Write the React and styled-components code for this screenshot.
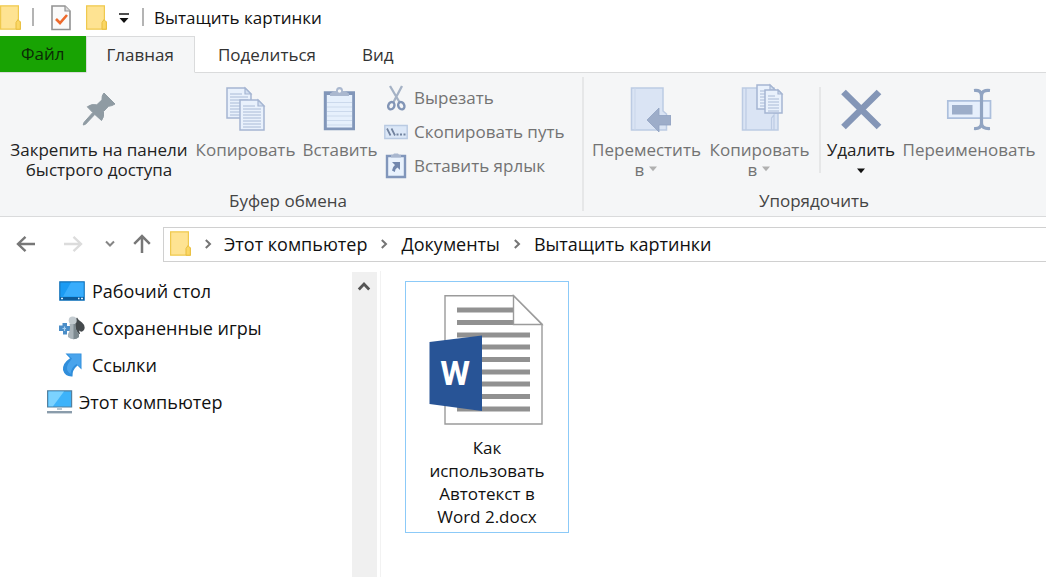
import React from "react";
import styled, { createGlobalStyle } from "styled-components";

const GlobalStyle = createGlobalStyle`
  * { box-sizing: border-box; }
  body { margin: 0; background: #fff; }
  button { font: inherit; color: inherit; background: none; border: 0; padding: 0; margin: 0; cursor: default; }
  a { color: inherit; text-decoration: none; }
  svg { display: block; flex: none; }
`;

const Window = styled.div`
  display: flex;
  flex-direction: column;
  min-height: 100vh;
  overflow: hidden;
  background: #fff;
  color: #111;
  font-family: "Open Sans", "Noto Sans", sans-serif;
  font-size: 17px;
  line-height: 20px;
  white-space: nowrap;
`;

const TitleBar = styled.header`
  display: flex;
  align-items: center;
  height: 36px;
`;

const QuickButton = styled.button`
  width: ${(p) => p.$width}px;
  height: 36px;
  display: flex;
  align-items: center;
  justify-content: ${(p) => p.$align || "center"};
`;

const TitleRule = styled.span`
  width: 2px;
  height: 18px;
  margin: 0 ${(p) => p.$gap}px 2px;
  background: #b4b4b4;
`;

const Title = styled.h1`
  margin: 0;
  padding-left: 2px;
  font-size: 17px;
  font-weight: 400;
`;

const TabBar = styled.nav`
  display: flex;
  height: 37px;
  border-bottom: 1px solid #dadbdc;
`;

const Tab = styled.button`
  height: 37px;
  padding: 0 22px;
  color: #333;
  border: 1px solid transparent;
  ${(p) => p.$active && `
    padding: 0 20px;
    background: #f5f6f7;
    border-color: #dadbdc;
    border-bottom-color: #f5f6f7;
  `}
  ${(p) => p.$file && `
    padding: 0 20px;
    height: 36px;
    background: #18a303;
    color: #0b2a06;
  `}
`;

const Ribbon = styled.section`
  display: flex;
  height: 144px;
  padding-top: 4px;
  background: #f5f6f7;
  border-bottom: 1px solid #dadbdc;
`;

const Group = styled.div`
  flex: none;
  display: flex;
  flex-direction: column;
  width: ${(p) => p.$width}px;
  height: 134px;
  border-right: ${(p) => (p.$ruled ? "2px solid #e6e7e8" : "0")};
`;

const GroupBody = styled.div`
  flex: 1;
  display: flex;
  padding: 4px 0 0 ${(p) => p.$inset}px;
`;

const GroupLabel = styled.div`
  height: 20px;
  padding-right: ${(p) => p.$shift || 0}px;
  text-align: center;
  color: #444;
`;

const BigButton = styled.button`
  flex: none;
  width: ${(p) => p.$width}px;
  height: 102px;
  display: flex;
  flex-direction: column;
  align-items: center;
  color: ${(p) => (p.$enabled ? "#222" : "#737373")};
  svg.icon { margin: 2px 0 7px; }
  svg.caret { display: inline-block; margin: 0 0 4px 4px; }
  > svg.caret { margin: 8px 0 0; }
`;

const SmallColumn = styled.div`
  display: flex;
  flex-direction: column;
  padding-left: 4px;
`;

const SmallButton = styled.button`
  display: flex;
  align-items: center;
  gap: 6px;
  height: 34px;
  color: #737373;
`;

const GroupRule = styled.span`
  width: 2px;
  height: 86px;
  margin: 6px 3px 0 5px;
  background: #e6e7e8;
`;

const AddressRow = styled.div`
  display: flex;
  align-items: center;
  height: 54px;
  padding-left: 16px;
`;

const NavButton = styled.button`
  width: ${(p) => p.$width}px;
  height: 34px;
  display: flex;
  align-items: center;
`;

const AddressBox = styled.nav`
  flex: 1;
  display: flex;
  align-items: center;
  height: 35px;
  padding-left: 6px;
  font-size: 18px;
  border: 1px solid #d0d0d0;
  border-right: 0;
`;

const CrumbSeparator = styled.span`
  display: flex;
  justify-content: center;
  width: ${(p) => p.$width}px;
`;

const Body = styled.main`
  flex: 1;
  display: flex;
`;

const Tree = styled.ul`
  flex: none;
  width: 352px;
  margin: 0;
  padding: 0;
  list-style: none;
  font-size: 18px;
`;

const TreeLink = styled.a`
  display: flex;
  align-items: center;
  gap: ${(p) => (p.$nested ? 7 : 6)}px;
  height: 37px;
  padding: 2px 0 0 ${(p) => (p.$nested ? 59 : 46)}px;
`;

const ScrollTrack = styled.div`
  flex: none;
  width: 25px;
  margin: 1px 3px 0 0;
  background: #f0f0f0;
`;

const ScrollUp = styled.button`
  display: flex;
  align-items: center;
  justify-content: center;
  width: 24px;
  height: 28px;
`;

const Files = styled.section`
  flex: 1;
  padding: 10px 24px;
  border-left: 1px solid #f2f2f2;
`;

const FileTile = styled.button`
  display: flex;
  flex-direction: column;
  align-items: center;
  width: 164px;
  height: 252px;
  padding-top: 11px;
  border: 1px solid #8ccaf8;
`;

const FileName = styled.span`
  width: 124px;
  margin-top: 9px;
  line-height: 23px;
  white-space: normal;
  text-align: center;
`;

const FolderIcon = () => (
  <svg width="21" height="26" viewBox="0 0 21 26" aria-hidden="true">
    <path d="M.6.8H18.4V17H20.3V24.2H.6Z" fill="#fee392" stroke="#efc94e" strokeWidth="1.2" />
    <path d="M16 24.2V17.5L18 14.6L20.3 17V24.2Z" fill="#fbd765" stroke="#e8bd3e" />
  </svg>
);

const CheckDocIcon = () => (
  <svg width="20" height="26" viewBox="0 0 20 26" aria-hidden="true">
    <path d="M1 1H14L19 6V24.5H1Z" fill="#fafafa" stroke="#929292" strokeWidth="1.6" />
    <path d="M14 1V6H19" fill="#ddd" stroke="#929292" strokeWidth="1.2" />
    <path d="M5 14L9 18L16 10" fill="none" stroke="#ee6a2c" strokeWidth="2.6" />
  </svg>
);

const MenuIcon = () => (
  <svg width="12" height="12" viewBox="0 0 12 12" aria-hidden="true">
    <path d="M1 2H11" stroke="#222" strokeWidth="1.6" />
    <path d="M1.5 6H10.5L6 11Z" fill="#111" />
  </svg>
);

const Icon48 = ({ children }) => (
  <svg className="icon" width="48" height="50" viewBox="0 0 48 50" aria-hidden="true">{children}</svg>
);

const PinIcon = () => (
  <Icon48>
    <path d="M29 10L40 21Q37 23 33.5 23.3L28.5 28.5Q29.5 34 26.5 37.5L19.8 31.4L10.5 41.3L8.2 42L9 39.4L17.8 29.5L12.3 23.8Q16.5 20.5 21.8 21.8L27 16.8Q26.5 12.5 29 10Z" fill="#8f9ba3" stroke="#8f9ba3" strokeWidth="1" strokeLinejoin="round" />
  </Icon48>
);

const Page = ({ x, y, w, h, lines, step = 3 }) => {
  const fold = Math.round(w / 4);
  return (
    <g transform={`translate(${x} ${y})`}>
      <path d={`M0 0H${w - fold}L${w} ${fold}V${h}H0Z`} fill="#e9f1fc" stroke="#a5b5d2" strokeWidth="1.5" />
      {Array.from({ length: lines }, (_, i) => (
        <path key={i} d={`M3 ${6 + i * step}H${i === 0 ? w - fold - 3 : w - 3}`} stroke="#a9bad6" />
      ))}
      <path d={`M${w - fold} 0V${fold}H${w}Z`} fill="#d3dff1" stroke="#a5b5d2" strokeWidth="1.2" />
    </g>
  );
};

const CopyIcon = () => (
  <Icon48>
    <Page x={5} y={5} w={24} h={30} lines={8} />
    <Page x={18} y={17} w={24} h={30} lines={8} />
  </Icon48>
);

const PasteIcon = () => (
  <Icon48>
    <path d="M7.8 8.2H39V47.2H7.8Z" fill="#8196b9" />
    <path d="M10.8 12H36.2V44.5H10.8Z" fill="#e6f0fc" />
    <path d="M11 19.5H36M11 24H36M11 28.5H36M11 33H36M11 37.5H36M11 42H36" stroke="#cbd9ec" strokeWidth="1.2" />
    <path d="M14 13V10.5L18 8H20Q20 4 23.5 4T27 8H29L33 10.5V13Z" fill="#aab8cf" />
    <circle cx="23.5" cy="8" r="1.7" fill="#f5f6f7" />
  </Icon48>
);

const MoveIcon = () => (
  <Icon48>
    <path d="M8.5 5H40V28L43.5 31V47H8.5Z" fill="#dae4f4" stroke="#bccbe3" strokeWidth="1.5" />
    <path d="M12 5V47" stroke="#c9d6ea" />
    <path d="M24 37L36 25V32.5H48V42H36V49Z" fill="#9dadc9" stroke="#90a2c2" strokeWidth=".8" />
  </Icon48>
);

const CopyToIcon = () => (
  <Icon48>
    <path d="M6.5 5H38V30H42V47H6.5Z" fill="#dae4f4" stroke="#bccbe3" strokeWidth="1.5" />
    <path d="M10 5V47M35.5 47V35L38 32V47" fill="none" stroke="#bccbe3" strokeWidth="1.2" />
    <Page x={21} y={2} w={18} h={24} lines={6} />
    <Page x={29} y={7} w={17} h={23} lines={6} />
  </Icon48>
);

const DeleteIcon = () => (
  <Icon48>
    <path d="M6.5 9L42 44M42 9L6.5 44" stroke="#8496b7" strokeWidth="6.6" />
  </Icon48>
);

const RenameIcon = () => (
  <Icon48>
    <path d="M2.8 17.8H45.5V35.2H2.8Z" fill="#e6effc" stroke="#acbfdc" strokeWidth="1.7" />
    <path d="M7 22H27.5V31.5H7Z" fill="#9cadc9" />
    <path d="M29 7.5Q36.5 6.5 36.5 13Q36.5 6.5 45 7.5M36.5 11V42M29 45.5Q36.5 46 36.5 40Q36.5 46 45 45.5" fill="none" stroke="#91a4c2" strokeWidth="3.2" />
  </Icon48>
);

const CutIcon = () => (
  <svg width="24" height="28" viewBox="0 0 24 28" aria-hidden="true">
    <path d="M6 2L16 19M18 2L9 19" stroke="#a5b2c5" strokeWidth="2.3" />
    <ellipse cx="7.3" cy="21.7" rx="3" ry="3.8" transform="rotate(25 7.3 21.7)" fill="none" stroke="#8295b6" strokeWidth="2.4" />
    <ellipse cx="17.3" cy="21.7" rx="3" ry="3.8" transform="rotate(-25 17.3 21.7)" fill="none" stroke="#8295b6" strokeWidth="2.4" />
  </svg>
);

const PathIcon = () => (
  <svg width="24" height="16" viewBox="0 0 24 16" aria-hidden="true">
    <path d="M.8 1.5H23.2V14.5H.8Z" fill="#dbe7f7" stroke="#b9cae2" strokeWidth="1.4" />
    <path d="M3 4.5L6.5 11.5M7.5 4.5L11 11.5" stroke="#71839f" strokeWidth="1.7" />
    <path d="M12.5 10.5H14.5M16 10.5H18M19.5 10.5H21.5" stroke="#71839f" strokeWidth="2" />
  </svg>
);

const ShortcutIcon = () => (
  <svg width="24" height="26" viewBox="0 0 24 26" aria-hidden="true">
    <path d="M3 3H21V24H3Z" fill="#e9f2fd" stroke="#8196bb" strokeWidth="2.4" />
    <path d="M7 4.5V1.8H9L10 .6H14L15 1.8H17V4.5Z" fill="#a9b7cf" />
    <path d="M8 9H16V17L13.5 14.6Q11 16 10.8 19L8 17.5Q8.3 14 11 12Z" fill="#7187ae" />
  </svg>
);

const Caret = ({ color }) => (
  <svg className="caret" width="10" height="6" viewBox="0 0 10 6" aria-hidden="true">
    <path d="M1 .5H9L5 5.2Z" fill={color} />
  </svg>
);

const ArrowIcon = ({ color, flip }) => (
  <svg width="20" height="18" viewBox="0 0 20 18" aria-hidden="true">
    <path d={flip ? "M1 9H18M10.5 1.8L18 9L10.5 16.2" : "M19 9H2M9.5 1.8L2 9L9.5 16.2"} fill="none" stroke={color} strokeWidth="2.4" />
  </svg>
);

const UpIcon = () => (
  <svg width="18" height="20" viewBox="0 0 18 20" aria-hidden="true">
    <path d="M9 19V2M1.2 9.8L9 2L16.8 9.8" fill="none" stroke="#777" strokeWidth="2.5" />
  </svg>
);

const ChevronDown = () => (
  <svg width="10" height="8" viewBox="0 0 10 8" aria-hidden="true">
    <path d="M1 1.5L5 5.5L9 1.5" fill="none" stroke="#858585" strokeWidth="2" />
  </svg>
);

const ChevronRight = () => (
  <svg width="8" height="10" viewBox="0 0 8 10" aria-hidden="true">
    <path d="M1.8 1L6 5L1.8 9" fill="none" stroke="#757575" strokeWidth="2" />
  </svg>
);

const DesktopIcon = () => (
  <svg width="26" height="20" viewBox="0 0 26 20" aria-hidden="true">
    <path d="M.8.8H25.2V19.2H.8Z" fill="#1b9bf3" stroke="#1473b8" strokeWidth="1.2" />
    <path d="M12 1.5H24.5V15.5H4Z" fill="#39adfc" />
    <path d="M1 16H25V19H1Z" fill="#0d5c9b" />
    <path d="M2 17.5H4M19 17.5H20.5M22 17.5H24" stroke="#d9efff" strokeWidth="1.4" />
  </svg>
);

const GamesIcon = () => (
  <svg width="26" height="24" viewBox="0 0 26 24" aria-hidden="true">
    <path d="M0 9.5H3.5V7H8V10H11V15H8V18.5H4V15H0Z" fill="#4a8dc7" />
    <path d="M3.5 12.5H7M5.5 10.5V15" stroke="#a8d0f0" strokeWidth="1.2" />
    <path d="M18 1.5Q19 4 23 6.5Q27 10 25 14Q22.5 17 20 14.5L21 18H15V4Q17 3 18 1.5Z" fill="#454a4d" />
    <circle cx="13.7" cy="4.5" r="4" fill="#c3cbd0" />
    <path d="M10.5 8H16.5Q16 14 20 18V21Q14.5 25.500 9 21V18Q12 14 10.500 8Z" fill="#aab4ba" />
    <path d="M16 8Q16 14 20 18V21Q17.500 23.300 14.500 23.300V8Z" fill="#7d898f" />
  </svg>
);

const LinksIcon = () => (
  <svg width="26" height="26" viewBox="0 0 26 26" aria-hidden="true">
    <path d="M6.5 1.500H22.500V17.500L18.500 13.500Q13 18 13.500 24.500Q6 25 4 18Q3.300 11.500 11 6.300Z" fill="#308edb" />
    <path d="M8.500 2.300H21.600V15.500L17.500 12Q12 15.500 11.500 22Q6 18 9 12L13 6.500Z" fill="#49a4ec" />
  </svg>
);

const ComputerIcon = () => (
  <svg width="27" height="24" viewBox="0 0 27 24" aria-hidden="true">
    <path d="M1.6.8H25.6V17H1.6Z" fill="#3db3fa" stroke="#55809d" strokeWidth="1.2" />
    <path d="M2.5 1.5H18L7 16.3H2.5Z" fill="#7bd2ff" />
    <path d="M11 17.6H16V20H11Z" fill="#b9c8d2" />
    <path d="M1 21H26V23.4H1Z" fill="#8a9cab" />
  </svg>
);

const ScrollArrow = () => (
  <svg width="14" height="10" viewBox="0 0 14 10" aria-hidden="true">
    <path d="M1.8 8.5L7 3L12.2 8.5" fill="none" stroke="#555" strokeWidth="2.8" />
  </svg>
);

const WordDocIcon = () => (
  <svg width="118" height="134" viewBox="0 0 118 134" aria-hidden="true">
    <path d="M17 2.7H85.5L114 31V131H17Z" fill="#fff" stroke="#9b9b9b" strokeWidth="1.4" />
    {[17, 29.5, 42, 54, 66.5, 79, 91, 103.5, 116].map((y, i) => (
      <path key={y} d={`M29 ${y}H${i < 2 ? 86 : 102}`} stroke="#919191" strokeWidth="5" />
    ))}
    <path d="M85.5 2.7V31.5H114Z" fill="#fff" stroke="#9b9b9b" strokeWidth="1.4" />
    <path d="M1.5 49L54 42.5V118L1.5 111Z" fill="#285496" />
    <text x="27" y="92" textAnchor="middle" fontFamily="Roboto, sans-serif" fontWeight="700" fontSize="34" fill="#fff">W</text>
  </svg>
);

export default function App() {
  return (
    <Window>
      <GlobalStyle />
      <TitleBar>
        <QuickButton $width={22} $align="flex-start" aria-label="Проводник"><FolderIcon /></QuickButton>
        <TitleRule $gap={10} />
        <QuickButton $width={34} aria-label="Свойства"><CheckDocIcon /></QuickButton>
        <QuickButton $width={36} aria-label="Новая папка"><FolderIcon /></QuickButton>
        <QuickButton $width={20} aria-label="Настройка панели"><MenuIcon /></QuickButton>
        <TitleRule $gap={8} />
        <Title>Вытащить картинки</Title>
      </TitleBar>

      <TabBar>
        <Tab $file>Файл</Tab>
        <Tab $active>Главная</Tab>
        <Tab>Поделиться</Tab>
        <Tab>Вид</Tab>
      </TabBar>

      <Ribbon>
        <Group $width={584} $ruled>
          <GroupBody $inset={7}>
            <BigButton $width={184} $enabled>
              <PinIcon />
              <span>Закрепить на панели<br />быстрого доступа</span>
            </BigButton>
            <BigButton $width={109}><CopyIcon /><span>Копировать</span></BigButton>
            <BigButton $width={80}><PasteIcon /><span>Вставить</span></BigButton>
            <SmallColumn>
              <SmallButton><CutIcon />Вырезать</SmallButton>
              <SmallButton><PathIcon />Скопировать путь</SmallButton>
              <SmallButton><ShortcutIcon />Вставить ярлык</SmallButton>
            </SmallColumn>
          </GroupBody>
          <GroupLabel $shift={6}>Буфер обмена</GroupLabel>
        </Group>
        <Group $width={460}>
          <GroupBody $inset={4}>
            <BigButton $width={117}>
              <MoveIcon />
              <span>Переместить<br />в<Caret color="#b0b0b0" /></span>
            </BigButton>
            <BigButton $width={109}>
              <CopyToIcon />
              <span>Копировать<br />в<Caret color="#b0b0b0" /></span>
            </BigButton>
            <GroupRule />
            <BigButton $width={74} $enabled>
              <DeleteIcon />
              <span>Удалить</span>
              <Caret color="#111" />
            </BigButton>
            <BigButton $width={142}><RenameIcon /><span>Переименовать</span></BigButton>
          </GroupBody>
          <GroupLabel>Упорядочить</GroupLabel>
        </Group>
      </Ribbon>

      <AddressRow>
        <NavButton $width={47} aria-label="Назад"><ArrowIcon color="#777" /></NavButton>
        <NavButton $width={42} aria-label="Вперед"><ArrowIcon color="#dcdcdc" flip /></NavButton>
        <NavButton $width={28} aria-label="Последние расположения"><ChevronDown /></NavButton>
        <NavButton $width={30} aria-label="Вверх"><UpIcon /></NavButton>
        <AddressBox aria-label="Адрес">
          <FolderIcon />
          <CrumbSeparator $width={33}><ChevronRight /></CrumbSeparator>
          <a href="#computer">Этот компьютер</a>
          <CrumbSeparator $width={34}><ChevronRight /></CrumbSeparator>
          <a href="#documents">Документы</a>
          <CrumbSeparator $width={34}><ChevronRight /></CrumbSeparator>
          <a href="#folder">Вытащить картинки</a>
        </AddressBox>
      </AddressRow>

      <Body>
        <Tree>
          <li><TreeLink href="#desktop" $nested><DesktopIcon />Рабочий стол</TreeLink></li>
          <li><TreeLink href="#games" $nested><GamesIcon />Сохраненные игры</TreeLink></li>
          <li><TreeLink href="#links" $nested><LinksIcon />Ссылки</TreeLink></li>
          <li><TreeLink href="#computer"><ComputerIcon />Этот компьютер</TreeLink></li>
        </Tree>
        <ScrollTrack><ScrollUp aria-label="Прокрутить вверх"><ScrollArrow /></ScrollUp></ScrollTrack>
        <Files>
          <FileTile>
            <WordDocIcon />
            <FileName>Как использовать Автотекст в Word 2.docx</FileName>
          </FileTile>
        </Files>
      </Body>
    </Window>
  );
}
